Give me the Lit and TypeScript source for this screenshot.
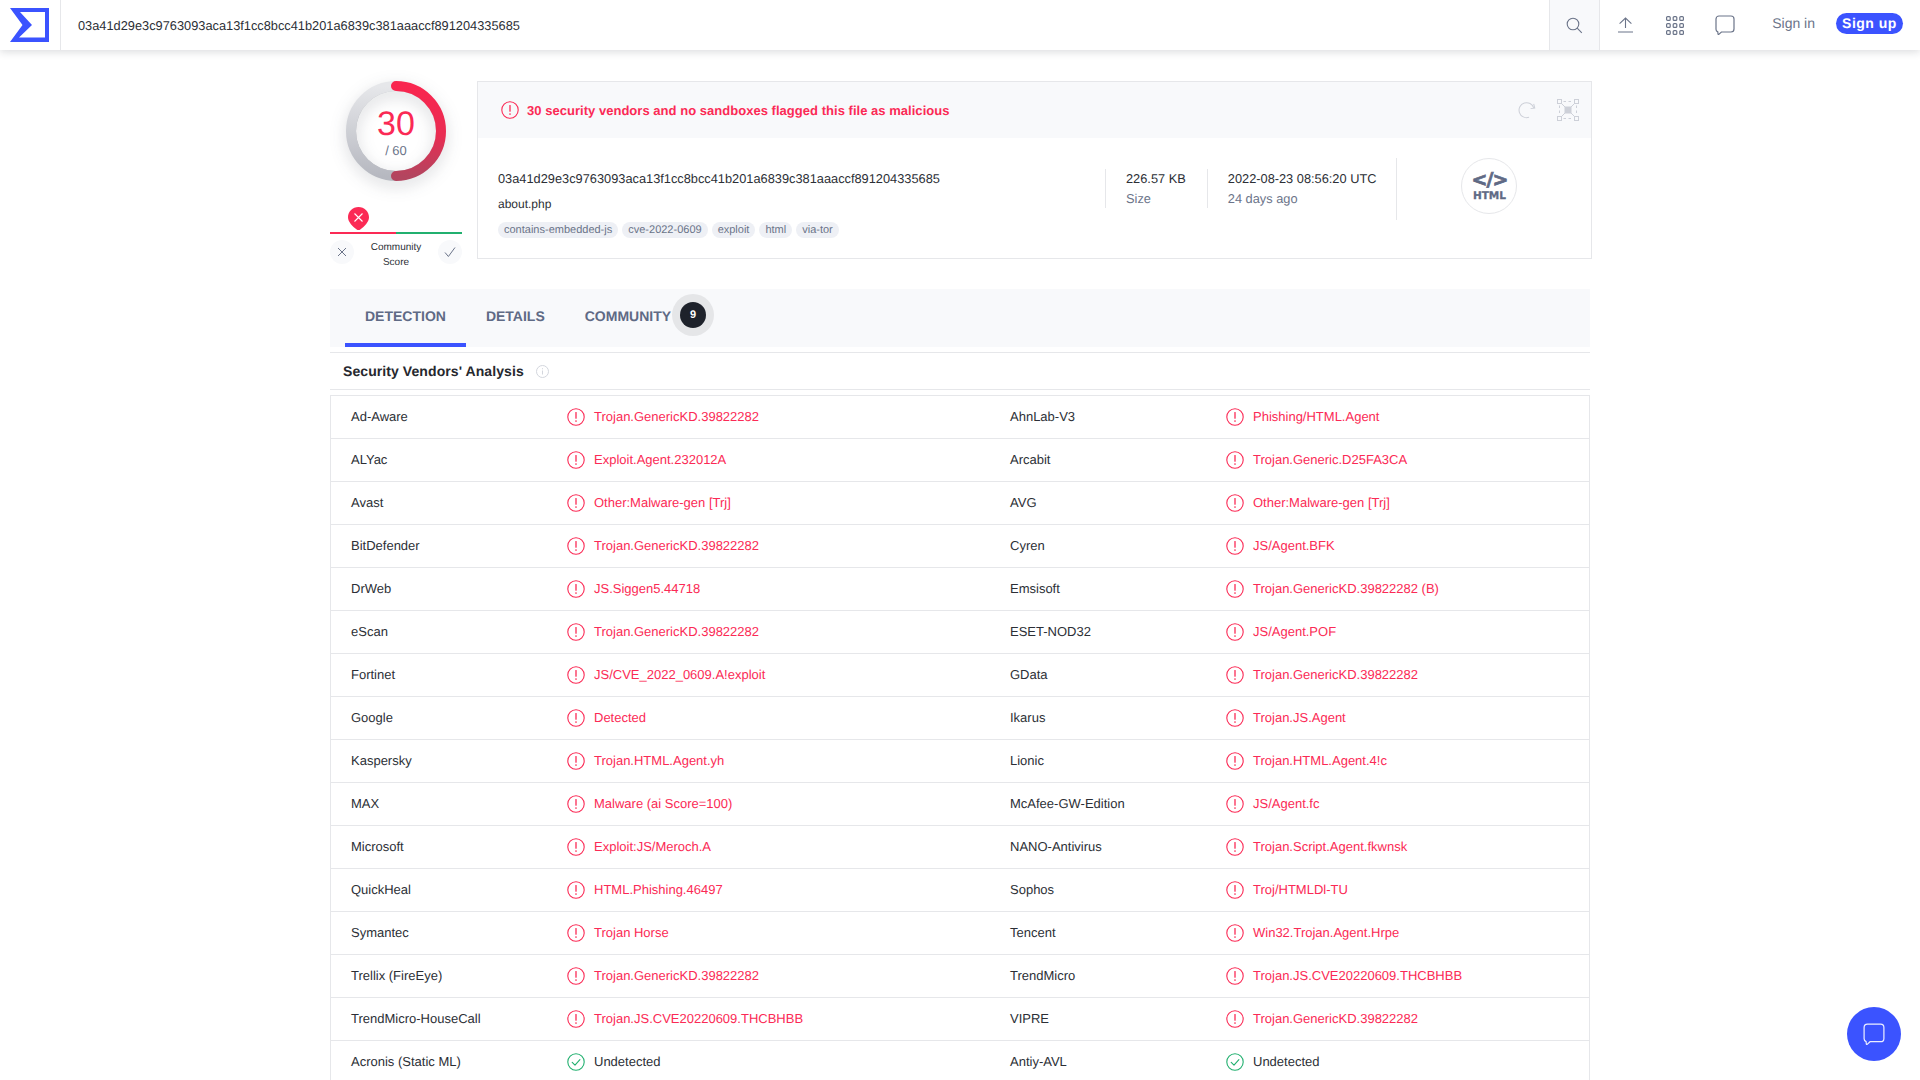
import { LitElement, html, css, svg } from "lit";
import { customElement } from "lit/decorators.js";

const HASH = "03a41d29e3c9763093aca13f1cc8bcc41b201a6839c381aaaccf891204335685";

// [vendor, result, vendor, result] per row, "" result means undetected
const ROWS: string[][] = [
  ["Ad-Aware", "Trojan.GenericKD.39822282", "AhnLab-V3", "Phishing/HTML.Agent"],
  ["ALYac", "Exploit.Agent.232012A", "Arcabit", "Trojan.Generic.D25FA3CA"],
  ["Avast", "Other:Malware-gen [Trj]", "AVG", "Other:Malware-gen [Trj]"],
  ["BitDefender", "Trojan.GenericKD.39822282", "Cyren", "JS/Agent.BFK"],
  ["DrWeb", "JS.Siggen5.44718", "Emsisoft", "Trojan.GenericKD.39822282 (B)"],
  ["eScan", "Trojan.GenericKD.39822282", "ESET-NOD32", "JS/Agent.POF"],
  ["Fortinet", "JS/CVE_2022_0609.A!exploit", "GData", "Trojan.GenericKD.39822282"],
  ["Google", "Detected", "Ikarus", "Trojan.JS.Agent"],
  ["Kaspersky", "Trojan.HTML.Agent.yh", "Lionic", "Trojan.HTML.Agent.4!c"],
  ["MAX", "Malware (ai Score=100)", "McAfee-GW-Edition", "JS/Agent.fc"],
  ["Microsoft", "Exploit:JS/Meroch.A", "NANO-Antivirus", "Trojan.Script.Agent.fkwnsk"],
  ["QuickHeal", "HTML.Phishing.46497", "Sophos", "Troj/HTMLDl-TU"],
  ["Symantec", "Trojan Horse", "Tencent", "Win32.Trojan.Agent.Hrpe"],
  ["Trellix (FireEye)", "Trojan.GenericKD.39822282", "TrendMicro", "Trojan.JS.CVE20220609.THCBHBB"],
  ["TrendMicro-HouseCall", "Trojan.JS.CVE20220609.THCBHBB", "VIPRE", "Trojan.GenericKD.39822282"],
  ["Acronis (Static ML)", "", "Antiy-AVL", ""],
];

const TAGS = ["contains-embedded-js", "cve-2022-0609", "exploit", "html", "via-tor"];

const alertIcon = html`<svg class="status" viewBox="0 0 18 18" fill="none" stroke="currentColor">
  <circle cx="9" cy="9" r="8.2" stroke-width="1.1"></circle>
  <path d="M9 4.6v5.6" stroke-width="1.3" stroke-linecap="round"></path>
  <circle cx="9" cy="13" r=".85" fill="currentColor" stroke="none"></circle>
</svg>`;

const okIcon = html`<svg class="status ok" viewBox="0 0 18 18" fill="none" stroke="currentColor">
  <circle cx="9" cy="9" r="8.2" stroke-width="1.1"></circle>
  <path d="M5.2 9.4l2.8 2.8 4.9-5.6" stroke-width="1.1" stroke-linecap="round" stroke-linejoin="round"></path>
</svg>`;

const chatPath = svg`<path d="M4 1h12a3 3 0 0 1 3 3v10a3 3 0 0 1-3 3H6.4l-2.6 2.400a.5.5 0 0 1-.8-.4l-.2-2.100A3 3 0 0 1 1 14V4a3 3 0 0 1 3-3z"></path>`;

const gridCells = [0, 7, 14].flatMap((y) =>
  [0, 6.6, 13.2].map((x) => svg`<rect x=${x + 0.6} y=${y + 0.6} width="3.6" height="3.800" rx="1"></rect>`)
);

@customElement("app-root")
export class AppRoot extends LitElement {
  static styles = css`
    * {
      box-sizing: border-box;
    }

    :host {
      display: block;
      height: 1080px;
      overflow: hidden;
      position: relative;
      background: #fff;
      color: #2c2f36;
      font-family: "Liberation Sans", Arial, sans-serif;
      font-size: 12.8px;
      text-rendering: geometricPrecision;
    }

    /* top bar */
    .nav {
      display: flex;
      align-items: stretch;
      height: 50px;
      background: #fff;
      box-shadow: 0 2px 8px rgba(30, 35, 50, 0.16);
    }

    .logo {
      display: flex;
      align-items: center;
      width: 61px;
      padding-left: 10px;
      border-right: 1px solid #e6e7ea;
    }

    .search-text {
      flex: 1;
      display: flex;
      align-items: center;
      padding-left: 17px;
    }

    .search-btn {
      display: flex;
      align-items: center;
      justify-content: center;
      width: 51px;
      padding-right: 2px;
      background: #f8f9fb;
      border: solid #e6e7ea;
      border-width: 0 1px;
    }

    .nav-icons {
      display: flex;
      align-items: center;
      color: #6b7489;
      padding-left: 18px;
    }

    .nav-icons svg {
      display: block;
      fill: none;
      stroke: currentColor;
    }

    .nav-icons .apps {
      margin: 0 31px 0 33px;
    }

    .sign-in {
      margin-left: 37px;
      align-self: center;
      margin-top: -4px;
      font-size: 14px;
      color: #6b7489;
    }

    .sign-up {
      align-self: center;
      margin: -3px 17px 0 21px;
      width: 67px;
      height: 21px;
      line-height: 20px;
      text-align: center;
      border-radius: 11px;
      background: #3b53ff;
      color: #fff;
      font-size: 14px;
      font-weight: 700;
      letter-spacing: 0.5px;
    }

    /* summary */
    main {
      width: 1260px;
      margin: 0 auto;
      padding-top: 31px;
    }

    .top {
      display: flex;
      gap: 15px;
      width: 1262px;
      height: 178px;
    }

    .left {
      width: 132px;
      flex: none;
    }

    .gauge {
      display: grid;
      width: 100px;
      height: 100px;
      margin: 0 auto;
      place-items: center;
    }

    .gauge > * {
      grid-area: 1 / 1;
    }

    .gauge svg {
      display: block;
      overflow: visible;
      filter: drop-shadow(0 5px 8px rgba(40, 45, 60, 0.18));
    }

    .gauge-disc {
      width: 80px;
      height: 80px;
      border-radius: 50%;
      background: #fff;
      box-shadow: -2px 1px 8px rgba(30, 35, 50, 0.38);
    }

    .gauge-text {
      padding-top: 12px;
      text-align: center;
    }

    .score {
      display: block;
      font-size: 34px;
      line-height: 34px;
      margin-top: -9px;
      color: #fb2a55;
    }

    .total {
      display: block;
      margin-top: 2px;
      font-size: 13px;
      line-height: 15px;
      color: #6b7489;
    }

    .pin {
      display: block;
      margin: 26px 0 2px 18px;
    }

    .bar {
      display: flex;
      height: 2px;
    }

    .bar i {
      flex: 1;
      background: #fb2a55;
    }

    .bar i + i {
      background: #21b06f;
    }

    .vote {
      display: flex;
      align-items: flex-start;
      justify-content: space-between;
      margin-top: 6px;
    }

    .vote-btn {
      display: flex;
      align-items: center;
      justify-content: center;
      width: 24px;
      height: 24px;
      border-radius: 50%;
      background: #f8f9fb;
      color: #6b7489;
    }

    .vote-label {
      font-size: 10px;
      line-height: 15px;
      text-align: center;
    }

    .card {
      flex: 1;
      height: 178px;
      border: 1px solid #e6e7ea;
    }

    .band {
      display: flex;
      align-items: center;
      height: 56px;
      padding: 0 12px 0 23px;
      background: #f8f9fb;
      color: #fb2a55;
      font-size: 13px;
      font-weight: 700;
      letter-spacing: 0.03px;
    }

    .band .status {
      width: 18px;
      height: 18px;
      margin-right: 8px;
    }

    .band .tools {
      margin-left: auto;
      display: flex;
      align-items: center;
      gap: 20px;
      color: #cdd0d8;
    }

    .tools svg {
      display: block;
    }

    .info {
      display: flex;
      padding: 20px 0 0 20px;
    }

    .file {
      width: 607px;
      flex: none;
      padding-top: 13px;
    }

    .file-hash {
      line-height: 16px;
    }

    .file-name {
      margin-top: 9px;
      font-size: 12px;
      line-height: 16px;
    }

    .tags {
      display: flex;
      gap: 4px;
      margin-top: 10px;
    }

    .tags span {
      height: 16px;
      padding: 0 6px;
      border-radius: 8px;
      background: #eef0f5;
      color: #6b7489;
      font-size: 11px;
      line-height: 17px;
    }

    .metric {
      height: 39px;
      margin-top: 11px;
      padding: 2px 20px 0;
      border-left: 1px solid #e6e7ea;
      line-height: 16px;
    }

    .metric.size {
      padding-right: 21px;
    }

    .metric small {
      display: block;
      margin-top: 4px;
      font-size: 12.8px;
      color: #6b7489;
    }

    .type {
      display: flex;
      justify-content: center;
      width: 185px;
      height: 62px;
      border-left: 1px solid #e6e7ea;
    }

    .type-circle {
      display: flex;
      flex-direction: column;
      align-items: center;
      justify-content: center;
      width: 56px;
      height: 56px;
      padding-top: 2px;
      border: 1px solid #e6e7ea;
      border-radius: 50%;
      color: #5f6a85;
      font-family: "DejaVu Sans", sans-serif;
      font-weight: 700;
    }

    .type-code {
      font-size: 19px;
      line-height: 19px;
      letter-spacing: -1px;
      -webkit-text-stroke: 0.7px #5f6a85;
    }

    .type-name {
      font-size: 10.5px;
      line-height: 13px;
      -webkit-text-stroke: 0.3px #5f6a85;
    }

    /* tabs */
    .tabs {
      display: flex;
      height: 58px;
      margin-top: 30px;
      padding-left: 15px;
      background: #f8f9fb;
    }

    .tab {
      display: flex;
      align-items: center;
      height: 58px;
      padding: 0 20px 4px;
      color: #5f6a85;
      font-size: 14px;
      font-weight: 700;
    }

    .tab.active {
      border-bottom: 4px solid #3b53ff;
      padding-bottom: 0;
    }

    .badge {
      display: flex;
      align-items: center;
      justify-content: center;
      width: 42px;
      height: 42px;
      margin: 5px 0 0 -19px;
      border-radius: 50%;
      background: #e5e6e8;
    }

    .badge span {
      display: flex;
      align-items: center;
      justify-content: center;
      width: 26px;
      height: 26px;
      border-radius: 50%;
      background: #1e222b;
      color: #fff;
      font-size: 11px;
      font-weight: 700;
    }

    .section {
      display: flex;
      align-items: center;
      height: 38px;
      margin-top: 5px;
      padding-left: 13px;
      border: solid #e6e7ea;
      border-width: 1px 0;
      font-size: 14px;
      font-weight: 700;
      letter-spacing: 0.08px;
      color: #26282e;
    }

    .section svg {
      display: block;
      margin-left: 12px;
    }

    /* vendors */
    .table {
      margin-top: 5px;
      border: solid #e6e7ea;
      border-width: 1px 1px 0;
      font-size: 13px;
    }

    .row {
      display: grid;
      grid-template-columns: 658px 1fr;
      height: 43px;
      border-bottom: 1px solid #e6e7ea;
    }

    .cell {
      display: flex;
      align-items: center;
      padding-left: 20px;
    }

    .cell + .cell {
      padding-left: 21px;
    }

    .vendor {
      width: 216px;
      flex: none;
      margin-top: -1px;
    }

    .status {
      display: block;
      flex: none;
      width: 18px;
      height: 18px;
      margin-right: 9px;
      color: #fb2a55;
    }

    .status.ok {
      color: #21b06f;
    }

    .result {
      margin-top: -1px;
    }

    .detected {
      color: #fb2a55;
    }

    .fab {
      position: absolute;
      left: 1847px;
      top: 1007px;
      display: flex;
      align-items: center;
      justify-content: center;
      width: 54px;
      height: 54px;
      border-radius: 50%;
      background: #3b53ff;
    }
  `;

  private renderCell(vendor: string, result: string) {
    return html`<div class="cell">
      <span class="vendor">${vendor}</span>
      ${result ? alertIcon : okIcon}
      <span class="result ${result ? "detected" : ""}">${result || "Undetected"}</span>
    </div>`;
  }

  render() {
    return html`
      <header class="nav">
        <div class="logo">
          <svg width="39" height="34" viewBox="0 0 39 34">
            <path fill="#3b53ff" fill-rule="evenodd" d="M0 0h39v34H0l12.500-17zM10 4l12 13-13 12.500h26V4z"></path>
          </svg>
        </div>
        <div class="search-text">${HASH}</div>
        <div class="search-btn">
          <svg width="18" height="18" viewBox="0 0 18 18" fill="none" stroke="#6b7489" stroke-width="1.1">
            <circle cx="8" cy="8" r="5.8"></circle>
            <path d="M12.2 12.2l4.6 4.6"></path>
          </svg>
        </div>
        <div class="nav-icons">
          <svg width="15" height="16" viewBox="0 0 15 16" stroke-width="1.1">
            <path d="M7.500 11V1M1.600 6.600L7.500 1l5.900 5.600M0 15h15"></path>
          </svg>
          <svg class="apps" width="18" height="19" viewBox="0 0 18 19" stroke-width="1.2">${gridCells}</svg>
          <svg width="20" height="20" viewBox="0 0 20 20" stroke-width="1.2">${chatPath}</svg>
        </div>
        <span class="sign-in">Sign in</span>
        <span class="sign-up">Sign up</span>
      </header>

      <main>
        <section class="top">
          <div class="left">
            <div class="gauge">
              <svg width="100" height="100" viewBox="0 0 100 100" fill="none" stroke-width="10" stroke-linecap="round">
                <defs>
                  <linearGradient id="red" x1="0" y1="0" x2="0" y2="1">
                    <stop offset="0" stop-color="#f9264f"></stop>
                    <stop offset=".55" stop-color="#e92c52"></stop>
                    <stop offset="1" stop-color="#b3455f"></stop>
                  </linearGradient>
                  <linearGradient id="grey" x1="0" y1="0" x2="0" y2="1">
                    <stop offset="0" stop-color="#e6e7ea"></stop>
                    <stop offset="1" stop-color="#b6b8c0"></stop>
                  </linearGradient>
                </defs>
                <path d="M50 5A45 45 0 0 0 50 95" stroke="url(#grey)"></path>
                <path d="M50 5A45 45 0 0 1 50 95" stroke="url(#red)"></path>
              </svg>
              <div class="gauge-disc"></div>
              <div class="gauge-text">
                <span class="score">30</span>
                <span class="total">/ 60</span>
              </div>
            </div>
            <svg class="pin" width="21" height="23" viewBox="0 0 21 23">
              <path fill="#fb2a55" d="M10.500 0C16.300 0 21 4.600 21 10.300c0 4.600-4.500 9.300-8.700 12.100-1.100.8-2.500.8-3.600 0C4.500 19.600 0 14.900 0 10.300 0 4.600 4.700 0 10.500 0z"></path>
              <path stroke="#fff" stroke-width="1.1" d="M6.500 6.500l8 8M14.500 6.500l-8 8"></path>
            </svg>
            <div class="bar"><i></i><i></i></div>
            <div class="vote">
              <span class="vote-btn">
                <svg width="10" height="10" viewBox="0 0 10 10" stroke="currentColor" stroke-width="1"><path d="M1 1l8 8M9 1l-8 8"></path></svg>
              </span>
              <span class="vote-label">Community<br />Score</span>
              <span class="vote-btn">
                <svg width="12" height="10" viewBox="0 0 12 10" fill="none" stroke="currentColor" stroke-width="1"><path d="M1 5.500l3.400 4L11 .5"></path></svg>
              </span>
            </div>
          </div>

          <div class="card">
            <div class="band">
              ${alertIcon}
              <span>30 security vendors and no sandboxes flagged this file as malicious</span>
              <span class="tools">
                <svg width="20" height="20" viewBox="0 0 20 20" fill="none" stroke="currentColor" stroke-width="1">
                  <path d="M17 9.500A7.500 7.500 0 1 0 10.500 17.500M17.800 5.500l.2 4.200-4.200-.3" transform="rotate(-12 10 10)"></path>
                </svg>
                <svg width="22" height="22" viewBox="0 0 22 22" fill="none" stroke="currentColor" stroke-width="1">
                  <rect x=".5" y=".5" width="4" height="4"></rect>
                  <rect x="17.500" y=".5" width="4" height="4"></rect>
                  <rect x=".5" y="17.500" width="4" height="4"></rect>
                  <rect x="17.500" y="17.500" width="4" height="4"></rect>
                  <path stroke-dasharray="2.500 2.500" d="M6.500 2.500h10M6.500 19.500h10M2.500 6.500v10M19.500 6.500v10"></path>
                  <path fill="currentColor" d="M8 8h6v6H8z"></path>
                  <path d="M4.500 4.500L8 8M17.500 4.500L14 8M4.500 17.500L8 14M17.500 17.500L14 14"></path>
                </svg>
              </span>
            </div>
            <div class="info">
              <div class="file">
                <div class="file-hash">${HASH}</div>
                <div class="file-name">about.php</div>
                <div class="tags">${TAGS.map((t) => html`<span>${t}</span>`)}</div>
              </div>
              <div class="metric size">226.57 KB<small>Size</small></div>
              <div class="metric">2022-08-23 08:56:20 UTC<small>24 days ago</small></div>
              <div class="type">
                <div class="type-circle">
                  <span class="type-code">&lt;/&gt;</span>
                  <span class="type-name">HTML</span>
                </div>
              </div>
            </div>
          </div>
        </section>

        <nav class="tabs">
          <div class="tab active">DETECTION</div>
          <div class="tab">DETAILS</div>
          <div class="tab">COMMUNITY</div>
          <div class="badge"><span>9</span></div>
        </nav>

        <div class="section">
          Security Vendors' Analysis
          <svg width="13" height="13" viewBox="0 0 13 13" fill="none" stroke="#d3d6dd">
            <circle cx="6.500" cy="6.500" r="6"></circle>
            <path d="M6.500 5.500v4M6.500 3.200v1.100"></path>
          </svg>
        </div>

        <div class="table">
          ${ROWS.map(
            (r) => html`<div class="row">${this.renderCell(r[0], r[1])}${this.renderCell(r[2], r[3])}</div>`
          )}
        </div>
      </main>

      <div class="fab">
        <svg width="22" height="22" viewBox="0 0 20 20" fill="none" stroke="#fff" stroke-width="1.1" opacity=".9">${chatPath}</svg>
      </div>
    `;
  }
}

declare global {
  interface HTMLElementTagNameMap {
    "app-root": AppRoot;
  }
}
